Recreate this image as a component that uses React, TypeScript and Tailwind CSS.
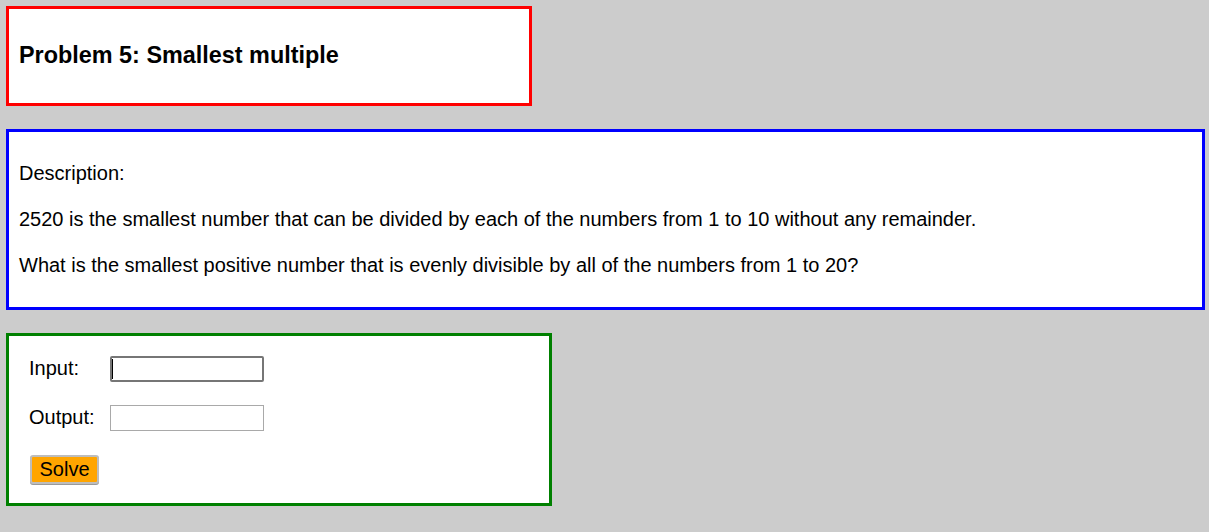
import React, { useState } from 'react';

const font = { fontFamily: '"Liberation Sans", Arial, sans-serif' };

export default function App() {
  const [input, setInput] = useState('');
  const [output, setOutput] = useState('');

  // smallest number evenly divisible by 1..n
  const solve = () => {
    const n = parseInt(input, 10);
    if (!n || n < 1) return;
    const gcd = (a: number, b: number): number => (b === 0 ? a : gcd(b, a % b));
    let result = 1;
    for (let i = 2; i <= n; i++) result = (result * i) / gcd(result, i);
    setOutput(String(result));
  };

  return (
    <div className="min-h-screen bg-[#cccccc] pt-[6px] pl-[6px] text-black text-[20px]" style={font}>
      {/* Title */}
      <div className="w-[526px] border-[3px] border-[#ff0000] bg-white px-[10px] py-[10px]">
        <h3 className="my-[23.4px] text-[23.4px] leading-[27px] font-bold">Problem 5: Smallest multiple</h3>
      </div>

      {/* Description */}
      <div className="mt-[23px] w-[1199px] border-[3px] border-[#0000ff] bg-white px-[10px] py-[30px] flex flex-col gap-[23px] leading-[23px]">
        <p>Description:</p>
        <p>2520 is the smallest number that can be divided by each of the numbers from 1 to 10 without any remainder.</p>
        <p>What is the smallest positive number that is evenly divisible by all of the numbers from 1 to 20?</p>
      </div>

      {/* Solver */}
      <div className="mt-[23px] w-[546px] border-[3px] border-[#008000] bg-white pl-[20px] pt-[20px] pb-[19px] flex flex-col">
        <div className="flex items-center h-[26px]">
          <label className="w-[81px] leading-[23px]">Input:</label>
          <div className="relative">
            <input
              value={input}
              onChange={e => setInput(e.target.value)}
              className="block w-[154px] h-[26px] rounded-[2px] border-2 border-[#767676] bg-white px-[1px] text-[13px] outline-none"
            />
            {input === '' && (
              <span className="absolute left-[2px] top-[3px] h-[20px] w-px bg-black" />
            )}
          </div>
        </div>
        <div className="mt-[23px] flex items-center h-[26px]">
          <label className="w-[81px] leading-[23px]">Output:</label>
          <input
            readOnly
            value={output}
            className="block w-[154px] h-[26px] border border-[#a9a9a9] bg-white px-[2px] text-[13px] outline-none"
          />
        </div>
        <div className="mt-[24px] flex pl-[1px]">
          <button
            onClick={solve}
            className="h-[29px] w-[69px] rounded-[3px] border-2 border-[#bdbdbd] bg-[#ffa500] text-[20px] leading-[23px] text-black shadow-[0_1px_0_#9a9a9a]"
          >
            Solve
          </button>
        </div>
      </div>
    </div>
  );
}
